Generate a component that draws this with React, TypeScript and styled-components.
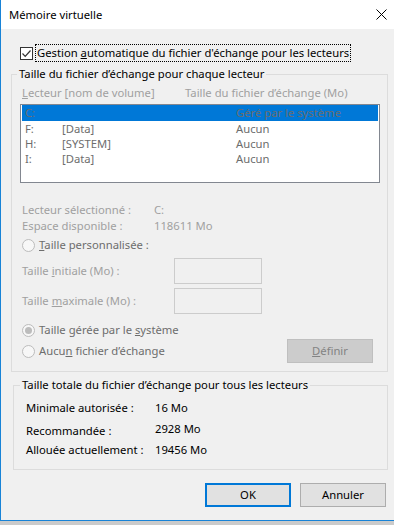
import styled, { createGlobalStyle } from "styled-components";

const GlobalStyle = createGlobalStyle`
  html, body { margin: 0; padding: 0; }
  body {
    background: #cbcbcb;
    font-family: "Noto Sans", sans-serif;
    font-size: 11.25px;
    overflow: hidden;
  }
`;

const Window = styled.div`
  width: 393px;
  height: 520px;
  border-left: 1px solid #1883d7;
  border-bottom: 1px solid #1883d7;
  background: #f0f0f0;
  display: flex;
  flex-direction: column;
  line-height: 16px;
  color: #000;
`;

const TitleBar = styled.div`
  height: 29px;
  background: #fff;
  display: flex;
  align-items: center;
  justify-content: space-between;
  padding-left: 8px;
`;

const CloseBox = styled.div`
  width: 26px;
  height: 29px;
  display: flex;
  align-items: center;
  justify-content: center;
`;

const CheckRow = styled.div`
  display: flex;
  align-items: center;
  margin: 15px 0 0 19px;
  height: 18px;
`;

const CheckBox = styled.span`
  width: 13px;
  height: 13px;
  box-sizing: border-box;
  border: 1px solid #333;
  background: #fff;
  display: flex;
  margin-right: 2px;
`;

const FocusLabel = styled.span`
  border: 1px dotted #000;
  padding: 0 1px;
  line-height: 16px;
`;

const Group = styled.fieldset<{ $left: number; $width: number; $top: number }>`
  margin: ${(p) => p.$top}px 0 0 ${(p) => p.$left}px;
  width: ${(p) => p.$width}px;
  box-sizing: border-box;
  padding: 0;
  border: 1px solid #dcdcdc;
  min-width: 0;
`;

const Legend = styled.legend<{ $offset: number }>`
  margin-left: ${(p) => p.$offset}px;
  padding: 0 2px;
  line-height: 16px;
`;

const HeaderRow = styled.div`
  display: flex;
  margin: 3px 0 0 10px;
  color: #a0a0a0;
`;

const Col = styled.span<{ $w?: number }>`
  width: ${(p) => (p.$w ? `${p.$w}px` : "auto")};
  flex: ${(p) => (p.$w ? "none" : "1")};
  white-space: nowrap;
`;

const ListBox = styled.div`
  margin: 3px 0 0 8px;
  width: 360px;
  height: 79px;
  box-sizing: border-box;
  border: 1px solid #828790;
  background: #fff;
  padding: 0 1px;
`;

const ListRow = styled.div<{ $selected?: boolean }>`
  display: flex;
  height: ${(p) => (p.$selected ? 16 : 15)}px;
  line-height: ${(p) => (p.$selected ? 16 : 15)}px;
  padding-left: 3px;
  background: ${(p) => (p.$selected ? "#0078d7" : "transparent")};
  color: #6d6d6d;
`;

const InfoRow = styled.div<{ $top?: number }>`
  display: flex;
  margin: ${(p) => p.$top ?? 0}px 0 0 10px;
  color: #a0a0a0;
`;

const RadioRow = styled.label<{ $top?: number; $left?: number }>`
  display: flex;
  align-items: center;
  height: 16px;
  margin: ${(p) => p.$top ?? 0}px 0 0 ${(p) => p.$left ?? 10}px;
  color: #6d6d6d;
`;

const Radio = styled.span<{ $checked?: boolean }>`
  width: 13px;
  height: 13px;
  box-sizing: border-box;
  border: 1px solid #bcbcbc;
  border-radius: 50%;
  background: #f7f7f7;
  margin-right: 4px;
  display: flex;
  align-items: center;
  justify-content: center;
  &::after {
    content: "";
    width: 7px;
    height: 7px;
    border-radius: 50%;
    background: ${(p) => (p.$checked ? "#bcbcbc" : "transparent")};
  }
`;

const FieldRow = styled.div<{ $top: number }>`
  display: flex;
  align-items: center;
  margin: ${(p) => p.$top}px 0 0 10px;
  color: #a0a0a0;
`;

const FieldLabel = styled.span`
  width: 152px;
`;

const Field = styled.span`
  width: 88px;
  height: 26px;
  box-sizing: border-box;
  border: 1px solid #cccccc;
  background: #f0f0f0;
`;

const LastRow = styled.div`
  display: flex;
  align-items: center;
  justify-content: space-between;
  height: 24px;
  margin: 1px 14px 8px 10px;
`;

const Button = styled.button<{ $variant?: "default" | "disabled" }>`
  width: 86px;
  height: 24px;
  box-sizing: border-box;
  padding: 0;
  font: inherit;
  line-height: 16px;
  border: 1px solid
    ${(p) =>
      p.$variant === "default" ? "#0078d7" : p.$variant === "disabled" ? "#bfbfbf" : "#adadad"};
  box-shadow: ${(p) => (p.$variant === "default" ? "inset 0 0 0 1px #0078d7" : "none")};
  background: ${(p) => (p.$variant === "disabled" ? "#cccccc" : "#e1e1e1")};
  color: ${(p) => (p.$variant === "disabled" ? "#838383" : "#000")};
`;

const TotalBody = styled.div`
  padding: 7px 0 11px 12px;
`;

const TotalRow = styled.div<{ $top?: number }>`
  display: flex;
  align-items: flex-start;
  height: 16px;
  margin-top: ${(p) => p.$top ?? 0}px;
`;

const TotalLabel = styled.span`
  width: 129px;
  white-space: nowrap;
`;

const TotalValue = styled.span<{ $raise?: number }>`
  margin-top: ${(p) => -(p.$raise ?? 0)}px;
`;

const Footer = styled.div`
  display: flex;
  justify-content: flex-end;
  gap: 9px;
  margin-top: 13px;
  padding-right: 8px;
`;

const drives = [
  { letter: "C:", label: "", size: "Géré par le système", selected: true },
  { letter: "F:", label: "[Data]", size: "Aucun" },
  { letter: "H:", label: "[SYSTEM]", size: "Aucun" },
  { letter: "I:", label: "[Data]", size: "Aucun" },
];

const totals = [
  { label: "Minimale autorisée :", value: "16 Mo", top: 0 },
  { label: "Recommandée :", value: "2928 Mo", top: 7, raise: 2 },
  { label: "Allouée actuellement :", value: "19456 Mo", top: 3 },
];

export default function App() {
  return (
    <>
      <GlobalStyle />
      <Window>
        <TitleBar>
          <span>Mémoire virtuelle</span>
          <CloseBox>
            <svg width="11" height="11" viewBox="0 0 11 11">
              <path d="M0.5 0.5 L10.5 10.5 M10.5 0.5 L0.5 10.5" stroke="#000" strokeWidth="1" />
            </svg>
          </CloseBox>
        </TitleBar>

        <CheckRow>
          <CheckBox>
            <svg width="11" height="11" viewBox="0 0 11 11">
              <path d="M1.5 5.5 L4.2 8.3 L9.5 2.5" fill="none" stroke="#333" strokeWidth="1.2" />
            </svg>
          </CheckBox>
          <FocusLabel>
            Gestion <u>a</u>utomatique du fichier d'échange pour les lecteurs
          </FocusLabel>
        </CheckRow>

        <Group $left={10} $width={377} $top={4}>
          <Legend $offset={5}>Taille du fichier d’échange pour chaque lecteur</Legend>
          <HeaderRow>
            <Col $w={163}>
              <u>L</u>ecteur [nom de volume]
            </Col>
            <Col>Taille du fichier d’échange (Mo)</Col>
          </HeaderRow>
          <ListBox>
            {drives.map((d) => (
              <ListRow key={d.letter} $selected={d.selected}>
                <Col $w={37}>{d.letter}</Col>
                <Col $w={174}>{d.label}</Col>
                <Col>{d.size}</Col>
              </ListRow>
            ))}
          </ListBox>

          <InfoRow $top={19}>
            <Col $w={132}>Lecteur sélectionné :</Col>
            <Col>C:</Col>
          </InfoRow>
          <InfoRow>
            <Col $w={132}>Espace disponible :</Col>
            <Col>118611 Mo</Col>
          </InfoRow>

          <RadioRow $top={3}>
            <Radio />
            <span>
              <u>T</u>aille personnalisée :
            </span>
          </RadioRow>

          <FieldRow $top={5}>
            <FieldLabel>
              Taille <u>i</u>nitiale (Mo) :
            </FieldLabel>
            <Field />
          </FieldRow>
          <FieldRow $top={4}>
            <FieldLabel>
              Taille <u>m</u>aximale (Mo) :
            </FieldLabel>
            <Field />
          </FieldRow>

          <RadioRow $top={8}>
            <Radio $checked />
            <span>
              Taille gérée par le <u>s</u>ystème
            </span>
          </RadioRow>
          <LastRow>
            <RadioRow $left={0}>
              <Radio />
              <span>
                Aucu<u>n</u> fichier d’échange
              </span>
            </RadioRow>
            <Button $variant="disabled">
              <u>D</u>éfinir
            </Button>
          </LastRow>
        </Group>

        <Group $left={12} $width={375} $top={5}>
          <Legend $offset={6}>Taille totale du fichier d’échange pour tous les lecteurs</Legend>
          <TotalBody>
            {totals.map((t) => (
              <TotalRow key={t.label} $top={t.top}>
                <TotalLabel>{t.label}</TotalLabel>
                <TotalValue $raise={t.raise}>{t.value}</TotalValue>
              </TotalRow>
            ))}
          </TotalBody>
        </Group>

        <Footer>
          <Button $variant="default">OK</Button>
          <Button>Annuler</Button>
        </Footer>
      </Window>
    </>
  );
}
